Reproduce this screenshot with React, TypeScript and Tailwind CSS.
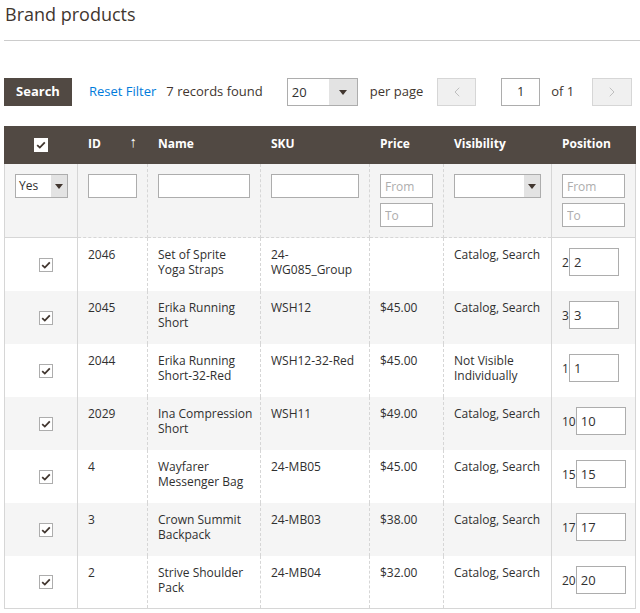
import { ChevronLeft, ChevronRight } from "lucide-react";

type Row = {
  id: string;
  name: string;
  sku: string;
  price: string;
  visibility: string;
  position: string;
};

const ROWS: Row[] = [
  { id: "2046", name: "Set of Sprite Yoga Straps", sku: "24-WG085_Group", price: "", visibility: "Catalog, Search", position: "2" },
  { id: "2045", name: "Erika Running Short", sku: "WSH12", price: "$45.00", visibility: "Catalog, Search", position: "3" },
  { id: "2044", name: "Erika Running Short-32-Red", sku: "WSH12-32-Red", price: "$45.00", visibility: "Not Visible Individually", position: "1" },
  { id: "2029", name: "Ina Compression Short", sku: "WSH11", price: "$49.00", visibility: "Catalog, Search", position: "10" },
  { id: "4", name: "Wayfarer Messenger Bag", sku: "24-MB05", price: "$45.00", visibility: "Catalog, Search", position: "15" },
  { id: "3", name: "Crown Summit Backpack", sku: "24-MB03", price: "$38.00", visibility: "Catalog, Search", position: "17" },
  { id: "2", name: "Strive Shoulder Pack", sku: "24-MB04", price: "$32.00", visibility: "Catalog, Search", position: "20" },
];

function Check({ header = false }: { header?: boolean }) {
  return (
    <span
      className={
        "inline-flex h-[14px] w-[14px] items-center justify-center bg-white " +
        (header ? "border border-white" : "border border-[#adadad]")
      }
    >
      <svg width="10" height="8" viewBox="0 0 10 8">
        <path d="M1.2 4.2 L3.8 6.6 L8.8 1.4" fill="none" stroke="#41362f" strokeWidth="1.8" />
      </svg>
    </span>
  );
}

function Caret() {
  return (
    <svg width="8" height="5" viewBox="0 0 8 5">
      <path d="M0 0 H8 L4 5 Z" fill="#41362f" />
    </svg>
  );
}

function FakeSelect({ value, width, arrow }: { value: string; width: string; arrow: string }) {
  return (
    <div className={"flex h-[24px] border border-[#adadad] bg-white " + width}>
      <span className="flex-1 pl-[3px] text-[12px] leading-[22px] text-[#303030]">{value}</span>
      <span className={"flex items-center justify-center bg-[#e3e3e3] " + arrow}>
        <Caret />
      </span>
    </div>
  );
}

const inputCls =
  "block h-[24px] w-full border border-[#adadad] bg-white px-[4px] text-[12px] text-[#303030] placeholder:text-[#adadad] outline-none";

export default function App() {
  return (
    <div className="h-[613px] w-[640px] overflow-hidden bg-white font-['Open_Sans',sans-serif] text-[#303030]">
      <div className="ml-[4px] h-[41px] border-b border-[#cccccc]">
        <h1 className="pl-[1px] pt-[2px] text-[18px] leading-[24px] text-[#41362f]">Brand products</h1>
      </div>

      <div className="ml-[4px] mt-[37px] flex h-[28px] items-center text-[13px]">
        <button className="h-[28px] w-[68px] bg-[#514943] text-[13px] font-bold text-white">Search</button>
        <span className="ml-[17px] text-[#007bdb]">Reset Filter</span>
        <span className="ml-[10px] text-[#41362f]">7 records found</span>
        <div className="ml-[24px] flex h-[28px] w-[71px] border border-[#adadad]">
          <span className="flex-1 pl-[4px] leading-[26px] text-[#303030]">20</span>
          <span className="flex w-[28px] items-center justify-center bg-[#e3e3e3]">
            <Caret />
          </span>
        </div>
        <span className="ml-[12px] text-[#41362f]">per page</span>
        <span className="ml-[14px] flex h-[28px] w-[39px] items-center justify-center border border-[#d6d6d6] bg-[#f0f0f0]">
          <ChevronLeft size={16} strokeWidth={1.2} color="#b3b3b3" />
        </span>
        <span className="ml-[25px] flex h-[28px] w-[39px] items-center justify-center border border-[#adadad] text-[#303030]">
          1
        </span>
        <span className="ml-[11px] text-[#41362f]">of 1</span>
        <span className="ml-[18px] flex h-[28px] w-[40px] items-center justify-center border border-[#d6d6d6] bg-[#f0f0f0]">
          <ChevronRight size={16} strokeWidth={1.2} color="#b3b3b3" />
        </span>
      </div>

      <table className="ml-[4px] mt-[20px] w-[632px] table-fixed border-collapse text-[12px] leading-[15px]">
        <colgroup>
          <col className="w-[73px]" />
          <col className="w-[70px]" />
          <col className="w-[113px]" />
          <col className="w-[109px]" />
          <col className="w-[74px]" />
          <col className="w-[108px]" />
          <col className="w-[84px]" />
        </colgroup>
        <thead>
          <tr className="h-[37px] bg-[#514943] text-left font-bold leading-[15px] text-white">
            <th className="border border-[#514943] pb-[3px] text-center align-middle">
              <span className="relative top-[1px] inline-flex">
                <Check header />
              </span>
            </th>
            <th className="border border-[#514943] border-l-[#8a837f] px-[10px] pb-[3px]">
              <div className="flex items-center justify-between">
                <span>ID</span>
                <span className="-mt-[4px] text-[15px] font-normal">↑</span>
              </div>
            </th>
            <th className="border border-[#514943] border-l-[#8a837f] px-[10px] pb-[3px]">Name</th>
            <th className="border border-[#514943] border-l-[#8a837f] px-[10px] pb-[3px]">SKU</th>
            <th className="border border-[#514943] border-l-[#8a837f] px-[10px] pb-[3px]">Price</th>
            <th className="border border-[#514943] border-l-[#8a837f] px-[10px] pb-[3px]">Visibility</th>
            <th className="border border-[#514943] border-l-[#8a837f] px-[10px] pb-[3px]">Position</th>
          </tr>
        </thead>
        <tbody>
          <tr className="h-[74px] bg-[#f4f4f4] align-top">
            <td className="border border-[#d6d6d6] px-[10px] pt-[10px]">
              <FakeSelect value="Yes" width="w-[53px]" arrow="w-[16px]" />
            </td>
            <td className="border border-dashed border-[#d6d6d6] px-[10px] pt-[10px]">
              <input className={inputCls} />
            </td>
            <td className="border border-dashed border-[#d6d6d6] px-[10px] pt-[10px]">
              <input className={inputCls} />
            </td>
            <td className="border border-dashed border-[#d6d6d6] px-[10px] pt-[10px]">
              <input className={inputCls} />
            </td>
            <td className="border border-dashed border-[#d6d6d6] px-[10px] pt-[10px]">
              <input className={inputCls} placeholder="From" />
              <input className={inputCls + " mt-[5px]"} placeholder="To" />
            </td>
            <td className="border border-dashed border-[#d6d6d6] px-[10px] pt-[10px]">
              <FakeSelect value="" width="w-full" arrow="w-[16px]" />
            </td>
            <td className="border border-[#d6d6d6] px-[10px] pt-[10px]">
              <input className={inputCls} placeholder="From" />
              <input className={inputCls + " mt-[5px]"} placeholder="To" />
            </td>
          </tr>
          {ROWS.map((r, i) => (
            <tr key={r.id} className={"h-[53px] align-top " + (i % 2 === 1 ? "bg-[#f5f5f5]" : "bg-white")}>
              <td className="border-x border-[#d6d6d6] pl-[34px] align-middle">
                <span className="inline-flex">
                  <Check />
                </span>
              </td>
              <td className="border-x border-dashed border-[#d6d6d6] px-[10px] pt-[9px]">{r.id}</td>
              <td className="border-x border-dashed border-[#d6d6d6] pl-[10px] pr-[4px] pt-[9px]">{r.name}</td>
              <td className="border-x border-dashed border-[#d6d6d6] px-[10px] pt-[9px]">{r.sku}</td>
              <td className="border-x border-dashed border-[#d6d6d6] px-[10px] pt-[9px]">{r.price}</td>
              <td className="border-x border-dashed border-[#d6d6d6] px-[10px] pt-[9px]">{r.visibility}</td>
              <td className="border-x border-[#d6d6d6] pl-[10px] pt-[10px]">
                <span className="whitespace-nowrap">
                  {r.position}
                  <input
                    className="h-[28px] w-[50px] border border-[#adadad] bg-white px-[4px] align-baseline text-[13px] text-[#303030] outline-none"
                    defaultValue={r.position}
                  />
                </span>
              </td>
            </tr>
          ))}
          <tr>
            <td colSpan={7} className="h-0 border-t border-[#d6d6d6] p-0" />
          </tr>
        </tbody>
      </table>
    </div>
  );
}
